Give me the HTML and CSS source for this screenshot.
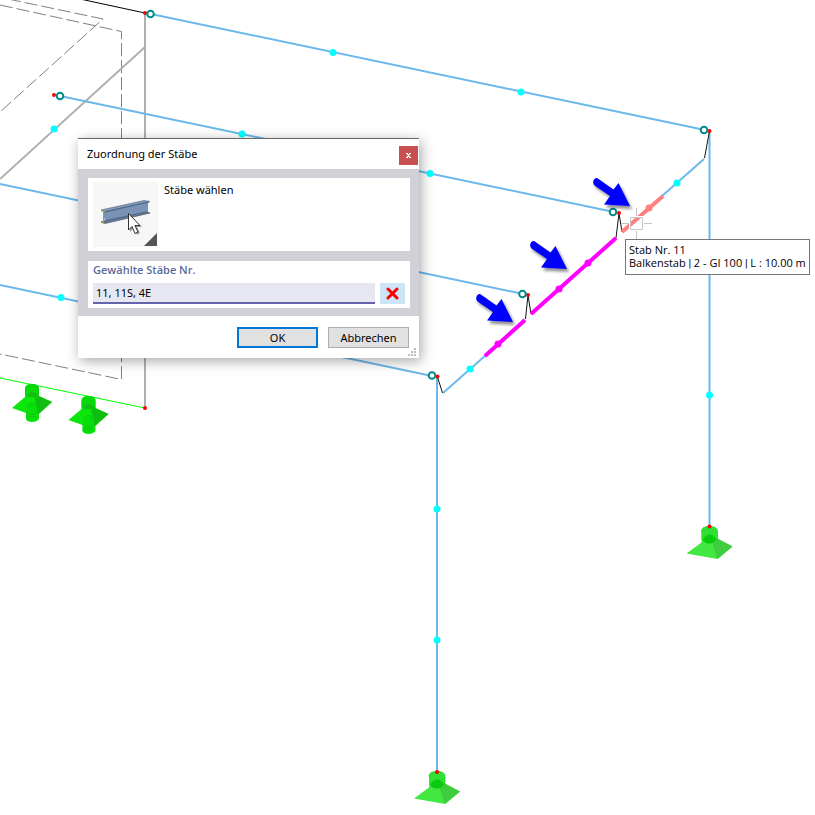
FILE: index.html
```html
<!DOCTYPE html>
<html lang="de">
<head>
<meta charset="utf-8">
<title>Zuordnung der Stäbe</title>
<link rel="stylesheet" href="styles.css">
</head>
<body>
<main class="workspace">
  <svg class="scene" viewBox="0 0 815 815" preserveAspectRatio="xMinYMin slice" aria-hidden="true">
    <defs>
      <filter id="arrow-shadow" x="-30%" y="-30%" width="170%" height="170%">
        <feDropShadow dx="2" dy="3" stdDeviation="1.5" flood-color="#000" flood-opacity=".45"/>
      </filter>
      <g id="arrow">
        <path d="M-31.500-27L-16.500-16.500L-11.500-23L0 0L-26-1.500L-20-10L-35.500-20.500Q-38-23.500-36-26.500Q-33.500-29-31.500-27Z" fill="#00f" filter="url(#arrow-shadow)"/>
      </g>
      <g id="hinge">
        <circle r="3.300" fill="#fff" stroke="#008b8b" stroke-width="2"/>
      </g>
      <g id="support">
        <path d="M-8 5Q-8 0 0 0Q8 0 8 5V12L23 20L8 32.500L-23 27L-8 16Z" fill="#42e842"/>
        <path d="M0 8L23 20L8 32.500Z" fill="#3fcc3f"/>
        <path d="M-8 5Q-8 0 0 0Q8 0 8 5V12Q6 16 0 16Q-6 16-8 12Z" fill="#30e034"/>
        <path d="M-7 13Q-3 8 0 8Q4 8 7 13Q4 17 0 17Q-5 17-7 13Z" fill="#07cb0c"/>
        <path d="M-8 5Q-8 0 0 0Q8 0 8 5V13" fill="none" stroke="#18d51c" stroke-dasharray="2 1"/>
      </g>
      <g id="foot">
        <path d="M-7 5Q-7 0 0 0Q7 0 7 5V12L20 18L7 30V35Q5 38 0 38Q-5 38-6 35V29L-20 24L-7 13Z" fill="#0be60d"/>
        <path d="M2 10L20 18L6 30Z" fill="#12bd12"/>
        <path d="M-7 5Q-7 0 0 0Q7 0 7 5V12Q4 14 0 13Q-4 14-7 12Z" fill="#08d90b"/>
        <path d="M-5 12Q-4 8 0 8Q4 8 6 12L0 13Z" fill="#12bd12"/>
        <path d="M-5 22Q0 16 5 22V35Q0 39-6 35Z" fill="#06df09"/>
        <path d="M-5 22Q0 17 5 22M-6 28Q0 33 6 28M-5 34Q0 30 5 34" fill="none" stroke="#11c614"/>
      </g>
    </defs>

    <g fill="none" stroke="#808080" stroke-dasharray="13 4">
      <path d="M8-1L103 19L0 112"/>
      <path d="M0 5L121.500 31.500V379.500L0 354"/>
    </g>
    <path d="M145 13V408M145 47L0 179" fill="none" stroke="#b0b0b0" stroke-width="2"/>
    <path d="M80-1L145 13" stroke="#000"/>
    <path d="M0 378L145 408" stroke="#0f0" stroke-width="1"/>
    <g fill="none" stroke="#6bb8eb" stroke-width="2">
      <path d="M151 14L705 130M60 96L614 212M0 184L523 294M0 285L432 376"/>
      <path d="M443 393L486 355M662 196L704 159"/>
      <path d="M437 377V772M709.500 131V527"/>
    </g>
    <g fill="none" stroke="#111">
      <path d="M437.500 377L442.500 393"/>
      <path d="M525.500 319L528 295L531 314"/>
      <path d="M616 238L619 213L622 232"/>
      <path d="M709.500 131L704.500 158"/>
    </g>
    <g stroke-width="4">
      <path d="M485 356L525 320M531 314L616 238" stroke="#f0f"/>
      <path d="M622 232L663 196" stroke="#ff8080"/>
    </g>
    <path d="M621 223.500H630M643 223.500H652M636.500 208V217M636.500 230V239" fill="none" stroke="#c4c4c4"/>
    <path d="M629.500 216.500H643.500V230.500H629.500Z" fill="none" stroke="#fff"/>
    <path d="M630.500 217.500H642.500V229.500H630.500Z" fill="none" stroke="#c8c8c8"/>

    <g fill="#0ff">
      <circle cx="333" cy="52.500" r="3.500"/><circle cx="521" cy="92" r="3.500"/>
      <circle cx="242" cy="134" r="3.500"/><circle cx="430" cy="173.500" r="3.500"/>
      <circle cx="54" cy="129" r="3.500"/><circle cx="61" cy="297.500" r="3.500"/>
      <circle cx="470" cy="369" r="3.500"/><circle cx="677" cy="183" r="3.500"/>
      <circle cx="709.500" cy="395" r="3.500"/><circle cx="437" cy="509" r="3.500"/>
      <circle cx="437" cy="640" r="3.500"/>
    </g>
    <g fill="#f0f">
      <circle cx="498" cy="344" r="3.500"/><circle cx="559" cy="289" r="3.500"/><circle cx="588" cy="263" r="3.500"/>
    </g>
    <circle cx="649" cy="208" r="3.500" fill="#ff8080"/>

    <use href="#foot" x="32" y="384"/>
    <use href="#foot" x="88.500" y="396"/>
    <use href="#support" x="709.500" y="526.500"/>
    <use href="#support" x="437" y="771.500"/>

    <g fill="#f00">
      <circle cx="145" cy="13" r="2"/><circle cx="54" cy="95" r="2"/><circle cx="145" cy="408" r="2"/>
      <circle cx="437.500" cy="376.500" r="2"/><circle cx="528" cy="295" r="2"/><circle cx="619" cy="213" r="2"/>
      <circle cx="709.500" cy="131" r="2"/><circle cx="709.500" cy="526.500" r="2"/><circle cx="437" cy="772" r="2"/>
    </g>
    <use href="#hinge" x="150.500" y="14"/>
    <use href="#hinge" x="60" y="96"/>
    <use href="#hinge" x="704" y="130"/>
    <use href="#hinge" x="613" y="212"/>
    <use href="#hinge" x="522.500" y="294"/>
    <use href="#hinge" x="432" y="375.500"/>

    <use href="#arrow" x="630" y="206"/>
    <use href="#arrow" x="567" y="269"/>
    <use href="#arrow" x="513" y="322"/>
  </svg>

  <form class="dialog" role="dialog" aria-labelledby="dialog-title">
    <header class="titlebar">
      <h1 class="title" id="dialog-title">Zuordnung der Stäbe</h1>
      <button class="close" type="button" aria-label="Schließen">
        <svg width="5" height="5" viewBox="0 0 5 5" aria-hidden="true"><path d="M0 .5H2M3 .5H5M0 4.500H2M3 4.500H5M1 .5L4 4.500M4 .5L1 4.500" stroke="#fff" stroke-width="1.200"/></svg>
      </button>
    </header>
    <div class="content">
      <section class="panel pick">
        <button class="member" type="button" aria-labelledby="pick-label">
          <svg viewBox="0 0 65 65" aria-hidden="true">
            <path d="M10 30L55 20V31L12 40Z" fill="#7893b5"/>
            <path d="M8 28L51 18.500L57 19.500L12 30Z" fill="#8299b7" stroke="#60738c" stroke-width=".7"/>
            <path d="M11 30L56 20" stroke="#50637f"/>
            <path d="M8 40L12 41.500L57 31L53 30L11 39Z" fill="#607a9c" stroke="#495569" stroke-width=".7"/>
            <path d="M8 28.500L12 30M8 40L12 41.500M10.500 30V40" stroke="#a99d45"/>
            <path d="M37 34V50L41 46L44 53L47 51L44 45H49Z" fill="#777" opacity=".7"/>
            <path d="M35.500 31.500V48L39 44.500L42 51.500L45 50L42 43.500H47Z" fill="#fff" stroke="#333"/>
            <path d="M51 64L64 51V64Z" fill="#555"/>
          </svg>
        </button>
        <span id="pick-label">Stäbe wählen</span>
      </section>
      <section class="panel selection">
        <label class="caption" for="members">Gewählte Stäbe Nr.</label>
        <div class="row">
          <input class="members" id="members" type="text" value="11, 11S, 4E">
          <button class="clear" type="button" aria-label="Auswahl löschen">
            <svg width="13" height="13" viewBox="0 0 13 13" aria-hidden="true"><path d="M2 2L11 11M11 2L2 11" stroke="#f00" stroke-width="3" stroke-linecap="round"/></svg>
          </button>
        </div>
      </section>
    </div>
    <footer class="actions">
      <button class="action primary" type="button">OK</button>
      <button class="action" type="button">Abbrechen</button>
      <svg class="grip" width="8" height="8" viewBox="0 0 8 8" aria-hidden="true"><path d="M6 0H8V2H6ZM3 3H5V5H3ZM6 3H8V5H6ZM0 6H2V8H0ZM3 6H5V8H3ZM6 6H8V8H6Z" fill="#bbb"/></svg>
    </footer>
  </form>

  <div class="tooltip" role="tooltip">
    <div>Stab Nr. 11</div>
    <div>Balkenstab<span class="separator"> | </span>2 - GI 100<span class="separator"> | </span>L : 10.00 m</div>
  </div>
</main>
</body>
</html>
```
FILE: styles.css
```css
* {
  box-sizing: border-box;
}

body {
  margin: 0;
  background: #fff;
  color: #000;
  font: 11px/13px "Noto Sans", "Open Sans", sans-serif;
}

button,
input {
  margin: 0;
  padding: 0;
  border: 0;
  border-radius: 0;
  color: inherit;
  font: inherit;
}

.workspace {
  position: relative;
  height: 100vh;
  overflow: hidden;
}

.scene {
  display: block;
  width: 100%;
  height: 100%;
}

.dialog {
  position: absolute;
  left: 78px;
  top: 138px;
  width: 341px;
  border-top: 1px solid #666;
  background: #fff;
  box-shadow: 2px 3px 12px rgba(0, 0, 0, .35);
}

.titlebar {
  display: flex;
  justify-content: space-between;
  height: 30px;
  padding: 7px 1px 0 9px;
}

.title {
  margin: 0;
  font-size: 11px;
  font-weight: 400;
  line-height: 15px;
}

.close {
  display: flex;
  align-items: center;
  justify-content: center;
  width: 19px;
  height: 19px;
  background: #c75050;
}

.content {
  display: grid;
  gap: 10px;
  padding: 9px 9px 8px 10px;
  background: #d1d0d6;
}

.panel {
  padding: 4px 5px;
  background: #fff;
}

.pick {
  display: flex;
  gap: 6px;
}

.pick span {
  padding-top: 1px;
}

.member {
  width: 65px;
  height: 65px;
  background: #f7f7f7;
}

.member svg {
  display: block;
}

.selection {
  display: grid;
  gap: 7px;
  padding-top: 2px;
}

.caption {
  color: #5a6a9c;
  font-family: "Open Sans", "Noto Sans", sans-serif;
  font-weight: 600;
}

.row {
  display: flex;
  gap: 5px;
}

.members {
  flex: 1;
  min-width: 0;
  height: 21px;
  padding: 0 3px;
  border-bottom: 2px solid #6464aa;
  background: #e7e7f1;
  outline: 0;
}

.clear {
  display: flex;
  align-items: center;
  justify-content: center;
  width: 25px;
  height: 21px;
  background: #cce4f7;
}

.actions {
  position: relative;
  display: flex;
  justify-content: flex-end;
  gap: 10px;
  padding: 11px 10px 10px;
}

.action {
  width: 81px;
  height: 21px;
  border: 1px solid #adadad;
  background: #e1e1e1;
}

.primary {
  border: 2px solid #0078d7;
}

.grip {
  position: absolute;
  right: 3px;
  bottom: 2px;
}

.tooltip {
  position: absolute;
  left: 625px;
  top: 239px;
  padding: 3px 3px 4px;
  border: 1px solid #767676;
  background: #fff;
  font-family: "Open Sans", "Noto Sans", sans-serif;
  white-space: nowrap;
}

.separator {
  font-family: Roboto, sans-serif;
}
```
